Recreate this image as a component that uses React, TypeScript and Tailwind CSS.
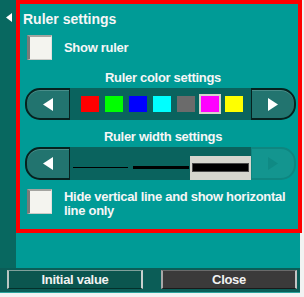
const swatches = ['#ff0000', '#00ff00', '#0000ff', '#00ffff', '#6b6b6b', '#ff00ff', '#ffff00'];

function Checkbox() {
    return (
        <div className="w-[25px] h-[25px] shrink-0 bg-[#f4f4ef] border-l-[3px] border-t-2 border-r border-b border-l-[#7a7a78] border-t-[#a4a4a0] border-r-[#e2e2de] border-b-[#cacac6]" />
    );
}

function ArrowButton({ dir, disabled }: { dir: 'left' | 'right'; disabled?: boolean }) {
    const shape = dir === 'left' ? 'rounded-l-[15px] border-l-2 border-r' : 'rounded-r-[15px] border-r-2 border-l';
    const tone = disabled
        ? 'bg-[#13958f] border-[#0e8680]'
        : 'bg-[#22746f] border-[#06221f] shadow-[inset_0_1px_0_rgba(255,255,255,0.18)]';
    return (
        <div className={`w-[45px] h-full shrink-0 flex items-center justify-center border-y-2 ${shape} ${tone}`}>
            <svg width="10" height="13" viewBox="0 0 10 13">
                <polygon
                    points={dir === 'left' ? '10,0 10,13 0,6.5' : '0,0 0,13 10,6.5'}
                    fill={disabled ? '#0f8a84' : '#ffffff'}
                />
            </svg>
        </div>
    );
}

export default function App() {
    return (
        <div className="w-[304px] h-[297px] relative overflow-hidden bg-[#f2f2f2] font-['Liberation_Sans',Arial,sans-serif] text-[#f6f6f6] font-bold tracking-[-0.3px]">
            <div className="w-[300px] flex flex-col">
                <div className="h-[268px] flex">
                    {/* collapse strip */}
                    <div className="w-[16px] shrink-0 bg-[#086860] pt-[13px] pl-[6px]">
                        <svg width="6" height="9" viewBox="0 0 6 9">
                            <polygon points="6,0 6,9 0,4.5" fill="#ffffff" />
                        </svg>
                    </div>

                    <div className="flex-1 bg-[#009b96] flex flex-col pt-[11px]">
                        <div className="pl-[7px] text-[14px] leading-[16px] tracking-normal">Ruler settings</div>

                        <div className="mt-[8px] pl-[11px] flex items-center gap-[12px]">
                            <Checkbox />
                            <span className="text-[13px] leading-[15px]">Show ruler</span>
                        </div>

                        <div className="mt-[10px] pl-[10px] text-center text-[13px] leading-[15px]">Ruler color settings</div>
                        <div className="mt-[3px] pl-[9px] pr-[4px]">
                            <div className="h-[32px] flex">
                                <ArrowButton dir="left" />
                                <div className="flex-1 bg-[#0a635e] flex items-center pl-[11px] gap-[6px]">
                                    {swatches.map(c => (
                                        <div
                                            key={c}
                                            className={`w-[18px] h-[16px] ${c === '#ff00ff' ? 'outline-2 outline-[#d4d4cc]' : ''}`}
                                            style={{ backgroundColor: c }}
                                        />
                                    ))}
                                </div>
                                <ArrowButton dir="right" />
                            </div>
                        </div>

                        <div className="mt-[9px] pl-[10px] text-center text-[13px] leading-[15px]">Ruler width settings</div>
                        <div className="mt-[3px] pl-[9px] pr-[4px]">
                            <div className="h-[33px] flex">
                                <ArrowButton dir="left" />
                                <div className="flex-1 bg-[#0a635e] flex items-center pt-[8px] pl-[3px]">
                                    <div className="w-[55px] h-px bg-black" />
                                    <div className="ml-[5px] w-[56px] h-[3px] bg-black" />
                                    <div className="ml-px w-[61px] h-[24px] bg-[#d6d6ce] flex items-center justify-center">
                                        <div className="w-[57px] h-[9px] bg-black border border-[#4a4a4a]" />
                                    </div>
                                </div>
                                <ArrowButton dir="right" disabled />
                            </div>
                        </div>

                        <div className="mt-[9px] pl-[11px] flex items-start gap-[12px]">
                            <Checkbox />
                            <span className="mt-px text-[13px] leading-[14px] whitespace-nowrap">
                                Hide vertical line and show horizontal
                                <br />
                                line only
                            </span>
                        </div>
                    </div>
                </div>

                <div className="h-[24px] bg-[#0b5d57] flex pl-[7px] pt-[2px] gap-[18px]">
                    <button className="w-[136px] h-[19px] bg-[#0b564f] border-l-2 border-t border-r-2 border-b border-l-[#b9c6c2] border-t-[#7fa09b] border-r-[#c8d0ce] border-b-[#04302b] text-[13px] leading-[15px] text-[#f2f2f2]">
                        Initial value
                    </button>
                    <button className="w-[136px] h-[19px] bg-[#3b3a3a] border-l-2 border-t border-r-2 border-b border-l-[#a8a8a8] border-t-[#6a6a6a] border-r-[#c4c4c4] border-b-[#1a1a1a] text-[13px] leading-[15px] text-[#f2f2f2]">
                        Close
                    </button>
                </div>
                <div className="h-px bg-[#2aa39d]" />
            </div>

            {/* highlight frame */}
            <div className="absolute left-[16px] top-0 w-[286px] h-[233px] border-4 border-[#ff0000] pointer-events-none" />
        </div>
    );
}
